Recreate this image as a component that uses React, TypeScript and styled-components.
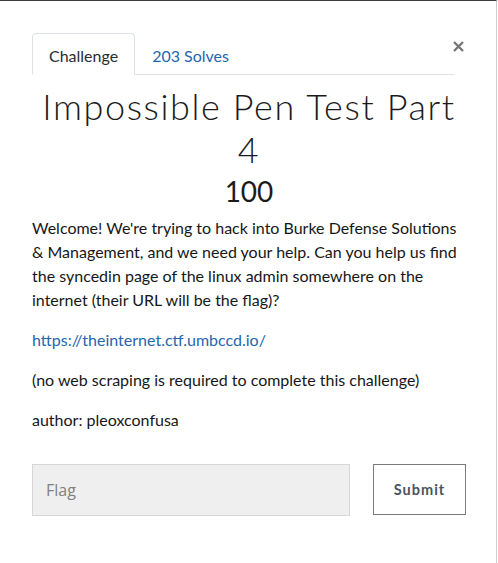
import React from "react";
import styled, { createGlobalStyle } from "styled-components";

const Global = createGlobalStyle`
  html, body { margin: 0; padding: 0; background: #fff; }
  body { font-family: Lato, "Noto Sans", sans-serif; color: #1d1f21; }
  * { box-sizing: border-box; }
`;

const Modal = styled.div`
  position: relative;
  width: 497px;
  min-height: 563px;
  background: #fff;
  border-top: 1px solid #3b3b3b;
  border-right: 1px solid #cfcfcf;
  padding: 32px 30px 40px 32px;
`;

const Close = styled.button`
  position: absolute;
  top: 39px;
  left: 452px;
  width: 13px;
  height: 13px;
  padding: 0;
  border: 0;
  background: transparent;
  cursor: pointer;
  display: flex;
  align-items: center;
  justify-content: center;
`;

const Tabs = styled.nav`
  display: flex;
  margin-right: 12px;
  border-bottom: 1px solid #dee2e6;
  height: 42px;
`;

const Tab = styled.a<{ $active?: boolean }>`
  display: flex;
  align-items: center;
  height: 42px;
  padding: 2px 16px 0 16px;
  margin-bottom: -1px;
  font-size: 16px;
  text-decoration: none;
  border: 1px solid ${(p) => (p.$active ? "#dee2e6" : "transparent")};
  border-bottom-color: ${(p) => (p.$active ? "#fff" : "transparent")};
  border-radius: 4px 4px 0 0;
  background: ${(p) => (p.$active ? "#fff" : "transparent")};
  color: ${(p) => (p.$active ? "#2a2c2e" : "#2466b0")};
`;

const Title = styled.h2`
  margin: 10px 0 0 0;
  text-align: center;
  font-family: Lato, sans-serif;
  font-weight: 300;
  font-size: 36px;
  line-height: 43px;
  letter-spacing: 1.6px;
  color: #1b1b1b;
`;

const Points = styled.h3`
  margin: 3px 0 0 0;
  text-align: center;
  font-weight: 400;
  font-size: 28px;
  line-height: 34px;
  color: #1b1b1b;
`;

const Description = styled.div`
  margin-top: 8px;
  font-size: 16px;
  line-height: 24px;
  color: #161718;
  p { margin: 0 0 16px 0; }
`;

const Link = styled.a`
  color: #2466b0;
  text-decoration: none;
`;

const Form = styled.form`
  display: flex;
  gap: 23px;
  margin-top: 32px;
`;

const FlagInput = styled.input`
  flex: 0 0 318px;
  width: 318px;
  height: 52px;
  padding: 0 13px;
  background: #efefef;
  border: 1px solid #d6d6d6;
  font-family: "Open Sans", "Liberation Sans", sans-serif;
  font-size: 16px;
  color: #333;
  outline: none;
  &::placeholder { color: #808080; }
`;

const SubmitButton = styled.button`
  flex: 0 0 93px;
  width: 93px;
  height: 51px;
  background: #fff;
  border: 1px solid #7b7b7b;
  font-family: Lato, sans-serif;
  font-weight: 700;
  font-size: 14.5px;
  letter-spacing: 1px;
  color: #4a5360;
  cursor: pointer;
`;

export default function App() {
  return (
    <>
      <Global />
      <Modal>
        <Close aria-label="Close">
          <svg width="11" height="11" viewBox="0 0 11 11">
            <path d="M1 1 L10 10 M10 1 L1 10" stroke="#777" strokeWidth="2.4" strokeLinecap="butt" />
          </svg>
        </Close>
        <Tabs>
          <Tab $active href="#">Challenge</Tab>
          <Tab href="#">203 Solves</Tab>
        </Tabs>
        <Title>Impossible Pen Test Part 4</Title>
        <Points>100</Points>
        <Description>
          <p>
            Welcome! We're trying to hack into Burke Defense Solutions &amp; Management, and we need
            your help. Can you help us find the syncedin page of the linux admin somewhere on the
            internet (their URL will be the flag)?
          </p>
          <p>
            <Link href="#">https://theinternet.ctf.umbccd.io/</Link>
          </p>
          <p>(no web scraping is required to complete this challenge)</p>
          <p>author: pleoxconfusa</p>
        </Description>
        <Form onSubmit={(e) => e.preventDefault()}>
          <FlagInput placeholder="Flag" />
          <SubmitButton type="submit">Submit</SubmitButton>
        </Form>
      </Modal>
    </>
  );
}
